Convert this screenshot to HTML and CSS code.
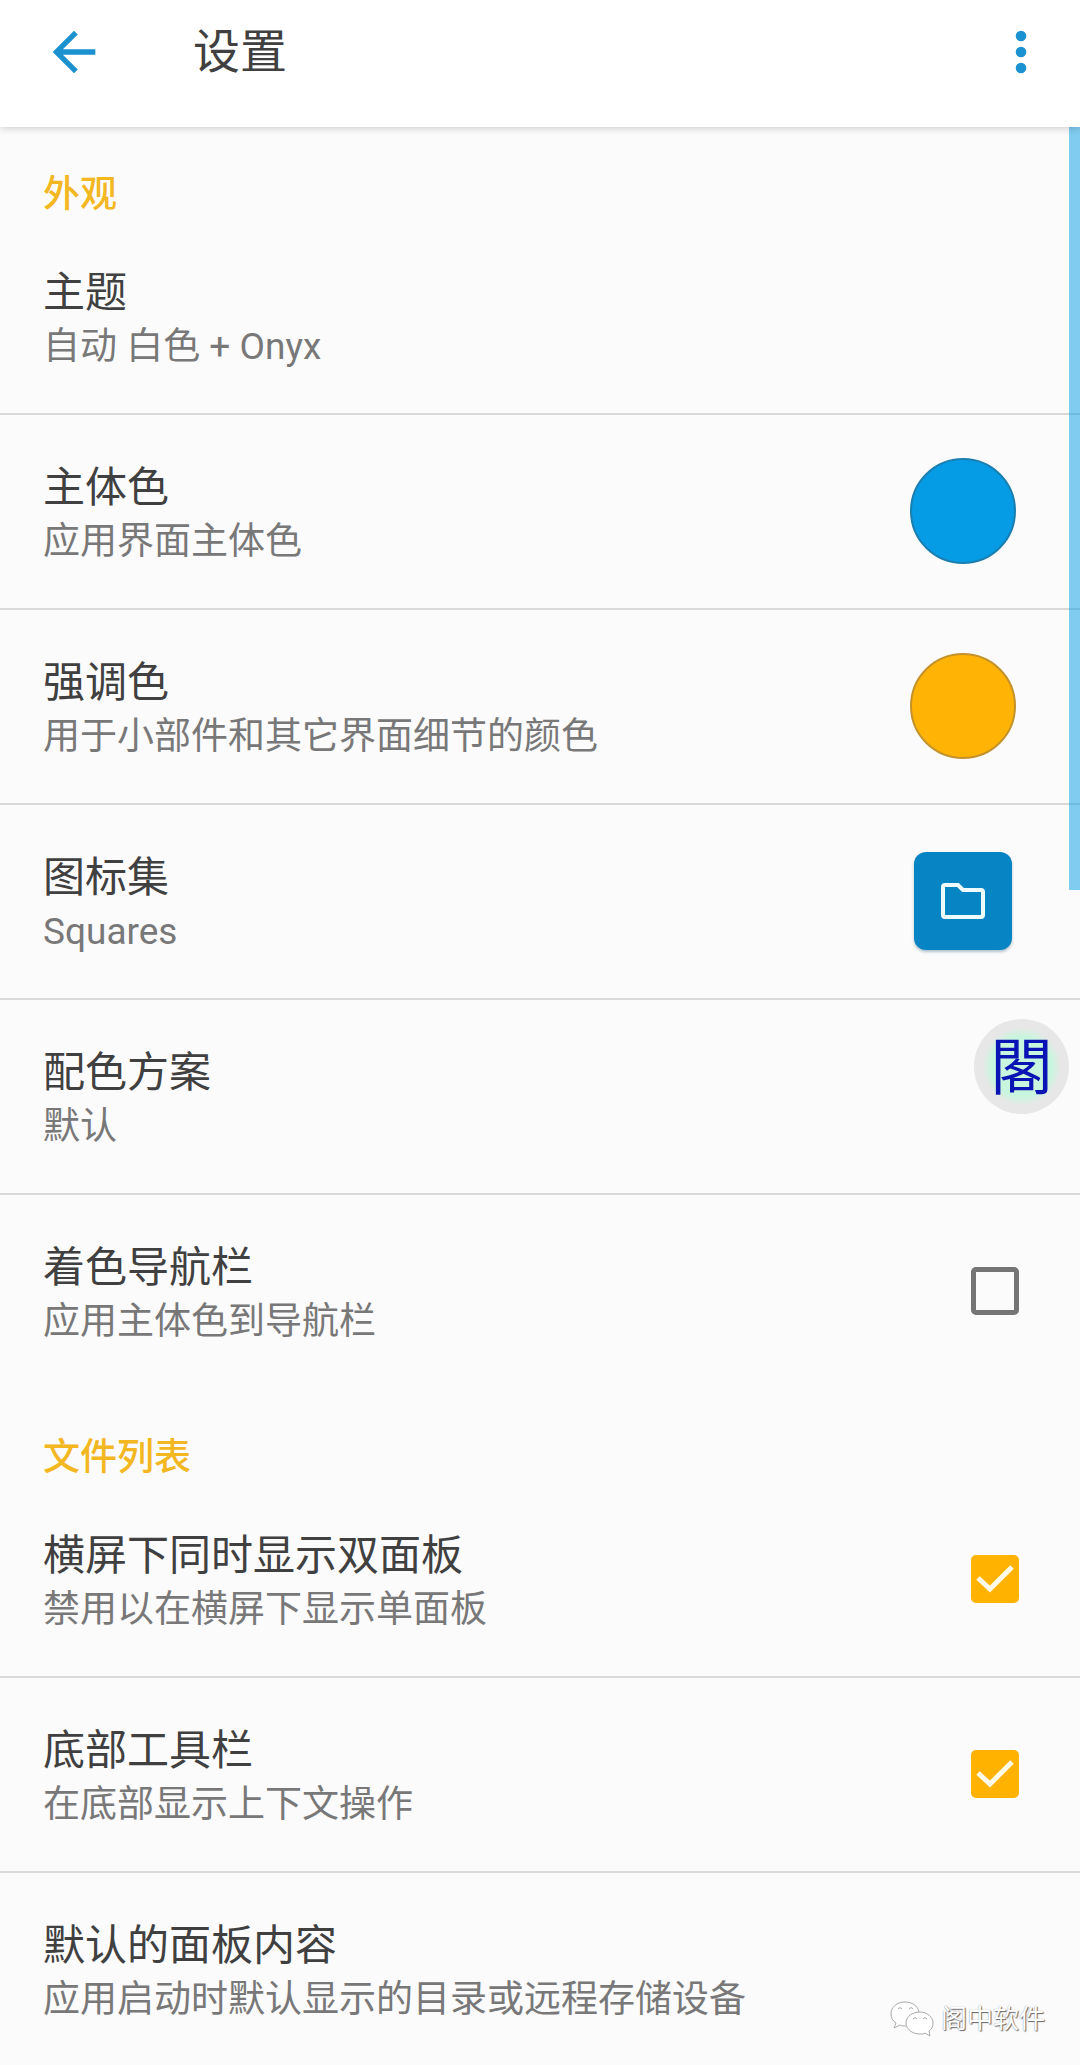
FILE: index.html
```html
<!DOCTYPE html>
<html lang="zh-CN">
<head>
    <meta charset="UTF-8">
    <meta name="viewport" content="width=device-width, initial-scale=1.0">
    <title>设置</title>
    <link rel="stylesheet" href="styles.css">
</head>
<body>
    <header class="toolbar">
        <button class="icon-button" type="button" aria-label="返回">
            <svg viewBox="0 0 24 24"><path d="M20 11H7.83l5.59-5.59L12 4l-8 8 8 8 1.41-1.41L7.83 13H20v-2z"/></svg>
        </button>
        <h1>设置</h1>
        <button class="icon-button" type="button" aria-label="更多">
            <svg viewBox="0 0 24 24"><circle cx="12" cy="6" r="2"/><circle cx="12" cy="12" r="2"/><circle cx="12" cy="18" r="2"/></svg>
        </button>
    </header>

    <main class="settings">
        <section>
            <h2>外观</h2>
            <div class="row">
                <div class="label">
                    <h3>主题</h3>
                    <p>自动 白色 + Onyx</p>
                </div>
            </div>
            <div class="row">
                <div class="label">
                    <h3>主体色</h3>
                    <p>应用界面主体色</p>
                </div>
                <button class="swatch swatch-primary" type="button" aria-label="主体色"></button>
            </div>
            <div class="row">
                <div class="label">
                    <h3>强调色</h3>
                    <p>用于小部件和其它界面细节的颜色</p>
                </div>
                <button class="swatch swatch-accent" type="button" aria-label="强调色"></button>
            </div>
            <div class="row">
                <div class="label">
                    <h3>图标集</h3>
                    <p>Squares</p>
                </div>
                <button class="icon-set" type="button" aria-label="图标集">
                    <svg viewBox="0 0 46 38"><path d="M5 3h13l5 5h18q2 0 2 2v23q0 2-2 2H5q-2 0-2-2V5q0-2 2-2z"/></svg>
                </button>
            </div>
            <div class="row">
                <div class="label">
                    <h3>配色方案</h3>
                    <p>默认</p>
                </div>
                <button class="floating-badge" type="button" lang="zh-TW">閣</button>
            </div>
            <div class="row">
                <label class="label" for="tint-nav">
                    <span class="title">着色导航栏</span>
                    <span class="summary">应用主体色到导航栏</span>
                </label>
                <span class="check">
                    <input type="checkbox" id="tint-nav">
                    <svg viewBox="0 0 48 48"><path d="M7 24l12 11 22-22"/></svg>
                </span>
            </div>
        </section>

        <section>
            <h2>文件列表</h2>
            <div class="row">
                <label class="label" for="dual-panel">
                    <span class="title">横屏下同时显示双面板</span>
                    <span class="summary">禁用以在横屏下显示单面板</span>
                </label>
                <span class="check">
                    <input type="checkbox" id="dual-panel" checked>
                    <svg viewBox="0 0 48 48"><path d="M7 23l12 11 22-22"/></svg>
                </span>
            </div>
            <div class="row">
                <label class="label" for="bottom-bar">
                    <span class="title">底部工具栏</span>
                    <span class="summary">在底部显示上下文操作</span>
                </label>
                <span class="check">
                    <input type="checkbox" id="bottom-bar" checked>
                    <svg viewBox="0 0 48 48"><path d="M7 23l12 11 22-22"/></svg>
                </span>
            </div>
            <div class="row">
                <div class="label">
                    <h3>默认的面板内容</h3>
                    <p>应用启动时默认显示的目录或远程存储设备</p>
                </div>
                <div class="watermark">
                    <svg viewBox="0 0 46 38">
                        <path d="M16 2C8 2 2 7 2 14c0 4 2 7 5 9l-2 5 6-3c2 1 4 1 6 1"/>
                        <path d="M16 2c7 0 13 4 14 10"/>
                        <path d="M31 12c-8 0-14 5-14 11s6 11 14 11c2 0 4 0 5-1l5 3-1-5c3-2 4-5 4-8 0-6-6-11-13-11z"/>
                        <path d="M9 9q2-3 4 0M20 9q2-3 4 0M24 19q2-3 4 0M34 19q2-3 4 0"/>
                    </svg>
                    <span>阁中软件</span>
                </div>
            </div>
        </section>
        <div class="scrollbar"></div>
    </main>
</body>
</html>
```
FILE: styles.css
```css
* {
    box-sizing: border-box;
}
body {
    margin: 0;
    background: #fbfbfb;
    color: #404040;
    font-family: Roboto, "Noto Sans CJK SC", sans-serif;
}
h1, h2, h3, p {
    margin: 0;
    font-weight: 400;
}
button {
    padding: 0;
    border: none;
    background: none;
    font-family: inherit;
}
svg {
    display: block;
}

/* top bar */
.toolbar {
    position: relative;
    z-index: 1;
    display: flex;
    align-items: flex-start;
    height: 127px;
    padding: 20px 27px 0 42px;
    background: #fff;
    box-shadow: 0 1px 8px rgba(0, 0, 0, 0.2);
}
.toolbar h1 {
    flex: 1;
    padding-left: 87px;
    font-size: 47px;
    line-height: 64px;
}
.icon-button,
.icon-button svg {
    width: 64px;
    height: 64px;
}
.icon-button svg {
    fill: #1b92cf;
}

/* list */
.settings {
    position: relative;
}
.settings h2 {
    padding: 43px 43px 0;
    color: #f3b722;
    font-size: 37px;
    font-weight: 500;
    line-height: 50px;
}
.row {
    position: relative;
    display: flex;
    align-items: center;
    padding: 39px 64px 40px 43px;
    border-bottom: 2px solid #d9d9d9;
}
section .row:last-child {
    border-bottom-color: transparent;
}
section:last-of-type .row:last-child {
    padding-bottom: 32px;
    border-bottom: none;
}
.label {
    flex: 1;
    padding-top: 6px;
}
.label h3,
.title {
    display: block;
    font-size: 42px;
    line-height: 56px;
}
.label p,
.summary {
    display: block;
    color: #787878;
    font-size: 37px;
    line-height: 52px;
}

/* right side controls */
.swatch {
    width: 106px;
    height: 106px;
    border-radius: 50%;
}
.swatch-primary {
    background: #059be5;
    border: 2px solid #1a7fb0;
}
.swatch-accent {
    background: #ffb305;
    border: 2px solid #c4922a;
}
.icon-set {
    display: grid;
    place-items: center;
    width: 98px;
    height: 98px;
    margin-right: 4px;
    border-radius: 12px;
    background: #0784c3;
    box-shadow: 0 2px 3px rgba(0, 60, 100, 0.3);
}
.icon-set svg {
    width: 46px;
    height: 38px;
    fill: none;
    stroke: #effcff;
    stroke-width: 4;
}
.floating-badge {
    position: absolute;
    top: 19px;
    right: 11px;
    width: 95px;
    height: 95px;
    padding-bottom: 8px;
    border-radius: 50%;
    background: radial-gradient(circle, #c8f5dd 45%, #e7e7e7 58%);
    color: #0a14b4;
    font-family: "Noto Sans CJK TC", sans-serif;
    font-size: 62px;
    line-height: 88px;
}
.check {
    position: relative;
    margin-right: -3px;
}
.check input {
    appearance: none;
    display: block;
    width: 48px;
    height: 48px;
    margin: 0;
    border: 5px solid #757575;
    border-radius: 5px;
}
.check input:checked {
    border-color: #ffb300;
    background: #ffb300;
}
.check svg {
    position: absolute;
    inset: 0;
    display: none;
    fill: none;
    stroke: #fffbe8;
    stroke-width: 5;
    pointer-events: none;
}
.check input:checked + svg {
    display: block;
}

.watermark {
    position: absolute;
    right: 35px;
    bottom: 20px;
    display: flex;
    align-items: center;
    gap: 6px;
    color: #fff;
    font-size: 26px;
    line-height: 38px;
    text-shadow: 1px 1px 1px #666, 0 0 1px #888;
}
.watermark svg {
    width: 46px;
    height: 38px;
    fill: #fff;
    stroke: #aaa;
}
.scrollbar {
    position: absolute;
    top: 0;
    right: 0;
    width: 11px;
    height: 763px;
    background: rgba(5, 155, 229, 0.5);
}
```
